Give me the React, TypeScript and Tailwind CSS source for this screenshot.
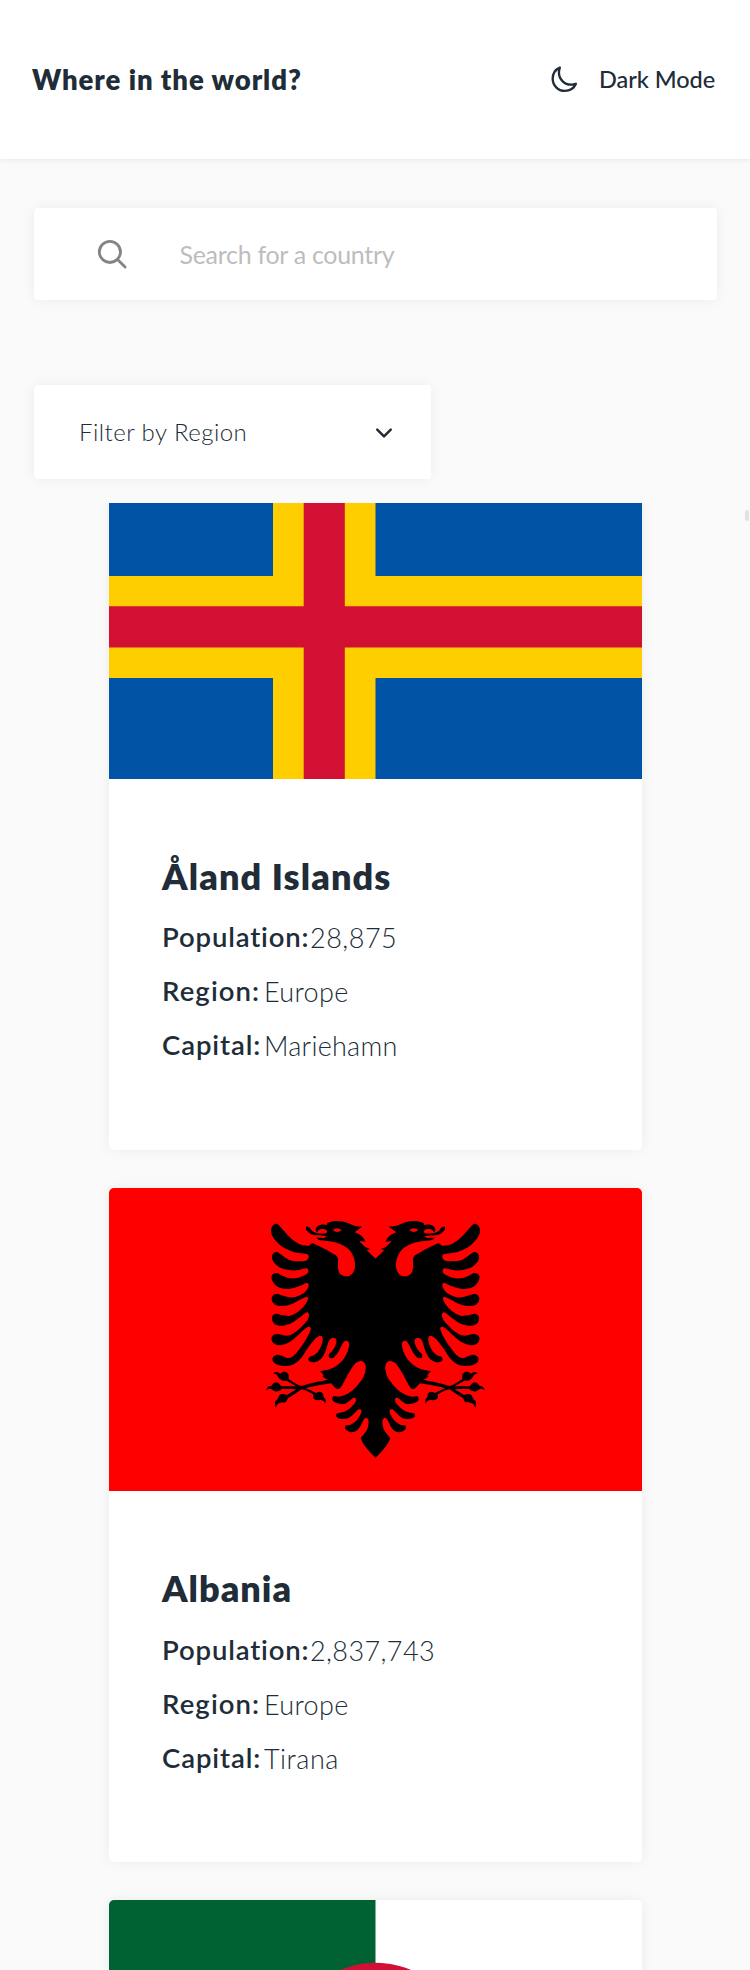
import React from "react";

type Point = [number, number];

/** Joins runs of points: smooth inside a run, a sharp corner between runs. */
function spline(runs: Point[][]): string {
  let d = `M${runs[0][0][0]} ${runs[0][0][1]}`;
  for (const run of runs) {
    for (let i = 0; i < run.length - 1; i++) {
      const p0 = run[Math.max(i - 1, 0)];
      const p1 = run[i];
      const p2 = run[i + 1];
      const p3 = run[Math.min(i + 2, run.length - 1)];
      const c1 = [p1[0] + (p2[0] - p0[0]) / 6, p1[1] + (p2[1] - p0[1]) / 6];
      const c2 = [p2[0] - (p3[0] - p1[0]) / 6, p2[1] - (p3[1] - p1[1]) / 6];
      d += `C${c1[0].toFixed(1)} ${c1[1].toFixed(1)} ${c2[0].toFixed(1)} ${c2[1].toFixed(1)} ${p2[0]} ${p2[1]}`;
    }
  }
  return d + "Z";
}

const EAGLE_HALF = spline([
  [[362, 176], [350, 165], [335, 150]],
  [[335, 150], [347, 147]],
  [[347, 147], [330, 140], [313, 124]],
  [[313, 124], [332, 125]],
  [[332, 125], [320, 108], [299, 97]],
  [[299, 97], [308, 90], [321, 80]],
  [[321, 80], [300, 78], [280, 70], [258, 64], [238, 63], [217, 69]],
  [[217, 69], [216, 75]],
  [[216, 75], [198, 74], [186, 80], [182, 89], [186, 98]],
  [[186, 98], [192, 89], [203, 87], [214, 90], [215, 98], [205, 101]],
  [[205, 101], [185, 99], [172, 93], [165, 84], [154, 79]],
  [[154, 79], [153, 88], [163, 99], [180, 106], [205, 107], [215, 108]],
  [[215, 108], [205, 114], [183, 112]],
  [[183, 112], [192, 120], [210, 122], [235, 126], [262, 135], [285, 152], [297, 175], [300, 200], [292, 221], [275, 229], [256, 222], [249, 205], [249, 177], [243, 166]],
  [[243, 166], [210, 147], [172, 129]],
  [[172, 129], [162, 137]],
  [[162, 137], [138, 134], [110, 117], [88, 94], [70, 74], [60, 72], [51, 80], [48, 94], [54, 111], [75, 135], [105, 152], [130, 159], [156, 162], [161, 171], [153, 182], [130, 184], [105, 181], [84, 168], [66, 156], [54, 161], [51, 175], [60, 191], [80, 205], [108, 211], [135, 209], [154, 205], [160, 212], [154, 223], [130, 233], [105, 235], [82, 227], [65, 219], [52, 224], [50, 237], [60, 254], [80, 265], [105, 266], [132, 259], [154, 249], [161, 254], [156, 269], [140, 283], [118, 292], [95, 290], [65, 282], [52, 289], [51, 302], [62, 315], [84, 318], [108, 313], [135, 299], [154, 291], [159, 298], [148, 317], [128, 336], [106, 347], [84, 346], [64, 341], [52, 348], [52, 362], [62, 374], [84, 377], [110, 369], [136, 351], [155, 337], [162, 344], [157, 361], [136, 384], [112, 402], [94, 407], [66, 402], [52, 408], [50, 420], [60, 433], [80, 435], [104, 426], [130, 405], [150, 386], [162, 380], [167, 388], [155, 415], [133, 448], [115, 468], [98, 474], [80, 467], [64, 465], [53, 474], [56, 487], [72, 496], [95, 498], [118, 492], [138, 475], [158, 445], [180, 417], [196, 407], [203, 414], [201, 430], [192, 451], [178, 465], [163, 471], [161, 481], [172, 487], [188, 484], [203, 470], [213, 449], [222, 422], [234, 413], [244, 419], [242, 434], [233, 451], [222, 463], [223, 473], [235, 473], [248, 459], [261, 434], [270, 423], [280, 425], [282, 437], [275, 461], [260, 484], [240, 500], [218, 509], [195, 513]],
  [[195, 513], [207, 526]],
  [[207, 526], [203, 529], [214, 538], [225, 541]],
  [[225, 541], [233, 555], [247, 567], [258, 561], [268, 544], [279, 523], [293, 500], [306, 487], [319, 483], [330, 491], [332, 508], [325, 532], [309, 554], [290, 573], [268, 586], [250, 590], [235, 588]],
  [[235, 588], [232, 600], [247, 610], [268, 612], [282, 604], [294, 594], [303, 597], [300, 608], [283, 626], [265, 636], [245, 640]],
  [[245, 640], [244, 650], [260, 657], [281, 654], [299, 639], [311, 628], [319, 631], [316, 645], [302, 664], [287, 674], [272, 676]],
  [[272, 676], [271, 686], [285, 696], [302, 694], [315, 681], [325, 661], [332, 653], [340, 659], [340, 675], [334, 693], [317, 714]],
  [[317, 714], [325, 731], [342, 753], [362, 774]],
]);

const TALONS = spline([
  [[230, 538], [205, 542], [175, 548], [138, 558]],
  [[138, 558], [118, 548], [101, 537]],
  [[101, 537], [101, 525], [94, 517], [84, 516], [76, 521]],
  [[76, 521], [65, 516], [54, 520]],
  [[54, 520], [66, 525], [72, 535], [83, 542], [95, 542]],
  [[95, 542], [125, 559]],
  [[125, 559], [100, 559], [79, 559]],
  [[79, 559], [70, 549], [57, 549], [49, 558]],
  [[49, 558], [39, 561], [33, 571]],
  [[33, 571], [43, 566], [50, 568], [60, 574], [72, 573], [80, 567]],
  [[80, 567], [105, 567], [124, 568]],
  [[124, 568], [96, 585]],
  [[96, 585], [84, 582], [74, 585], [68, 597]],
  [[68, 597], [60, 606], [62, 624]],
  [[62, 624], [68, 612], [78, 608], [92, 606], [99, 594]],
  [[99, 594], [120, 581], [140, 568]],
  [[140, 568], [156, 573], [175, 583]],
  [[175, 583], [175, 594], [184, 600], [199, 600]],
  [[199, 600], [207, 604], [210, 611]],
  [[210, 611], [212, 600], [206, 592]],
  [[206, 592], [203, 580], [194, 575], [183, 579]],
  [[183, 579], [165, 570], [150, 564]],
  [[150, 564], [185, 557], [233, 549]],
]);

function AlandFlag() {
  return (
    <svg viewBox="0 22.5 533 303" className="block h-[303px] w-full" preserveAspectRatio="none">
      <rect width="533" height="349" fill="#0053a5" />
      <path d="M164 0h102.5v349H164zM0 122.5h533v102H0z" fill="#ffce00" />
      <path d="M194.7 0h41.1v349h-41.1zM0 152.8h533v41.1H0z" fill="#d21034" />
    </svg>
  );
}

function AlbaniaFlag() {
  return (
    <svg viewBox="0 0 533 303" className="block h-[303px] w-full">
      <rect width="533" height="303" fill="#ff0000" />
      {["translate(146 12) scale(.33333)", "translate(387 12) scale(-.33333 .33333)"].map((transform) => (
        <g key={transform} transform={transform}>
          <path d={EAGLE_HALF} />
          <path d={TALONS} />
          <path d="M233 90q13-11 27 0q-14 12-27 0z" fill="#ff0000" />
        </g>
      ))}
      <path d="M265 71.5h3v196h-3z" />
    </svg>
  );
}

function AlgeriaFlag() {
  return (
    <svg viewBox="0 0 533 303" className="block h-[303px] w-full">
      <rect width="533" height="303" fill="#fff" />
      <rect width="266.5" height="303" fill="#006233" />
      <path
        d="M335.5 95.1a88.8 88.8 0 1 0 0 112.8a71 71 0 1 1 0-112.8z"
        fill="#d21034"
      />
      <path d="M250 151.5l62-20-38 52v-64l38 52z" fill="#d21034" />
    </svg>
  );
}

type Detail = { label: string; labelClass: string; value: string; valueClass: string };
type Country = {
  name: string;
  nameClass: string;
  Flag: () => React.ReactElement;
  details: Detail[];
};

const countries: Country[] = [
  {
    name: "Åland Islands",
    nameClass: "mb-[9px] tracking-[1.1px]",
    Flag: AlandFlag,
    details: [
      { label: "Population:", labelClass: "w-[148px] tracking-[0.85px]", value: "28,875", valueClass: "tracking-[0.5px]" },
      { label: "Region:", labelClass: "w-[102px] tracking-[1.1px]", value: "Europe", valueClass: "tracking-[0.35px]" },
      { label: "Capital:", labelClass: "w-[102px] tracking-[0.9px]", value: "Mariehamn", valueClass: "tracking-[0.25px]" },
    ],
  },
  {
    name: "Albania",
    nameClass: "mb-[10px] tracking-[1px]",
    Flag: AlbaniaFlag,
    details: [
      { label: "Population:", labelClass: "w-[148px] tracking-[0.85px]", value: "2,837,743", valueClass: "tracking-[0.4px]" },
      { label: "Region:", labelClass: "w-[102px] tracking-[1.1px]", value: "Europe", valueClass: "tracking-[0.35px]" },
      { label: "Capital:", labelClass: "w-[102px] tracking-[0.9px]", value: "Tirana", valueClass: "tracking-[0.5px]" },
    ],
  },
  { name: "", nameClass: "", Flag: AlgeriaFlag, details: [] },
];

function CountryCard({ country }: { country: Country }) {
  const { Flag } = country;
  return (
    <article className="h-[674px] w-[533px] shrink-0 overflow-hidden rounded-[5px] bg-white shadow-[0_0_14px_rgba(0,0,0,0.06)]">
      <Flag />
      <div className="px-[53px] pt-[72px]">
        <h2 className={`text-[36px] leading-[50px] font-extrabold whitespace-nowrap ${country.nameClass}`}>
          {country.name}
        </h2>
        {country.details.map((detail) => (
          <div key={detail.label} className="flex h-[54px] leading-[54px] whitespace-nowrap">
            <span className={`text-[27.5px] font-semibold ${detail.labelClass}`}>{detail.label}</span>
            <span className={`pt-px text-[27px] font-light ${detail.valueClass}`}>{detail.value}</span>
          </div>
        ))}
      </div>
    </article>
  );
}

export default function App() {
  return (
    <div className="flex h-[1970px] w-[750px] flex-col overflow-hidden bg-[#fafafa] font-['Lato',sans-serif] text-[#202c37]">
      <header className="z-10 flex h-[159px] shrink-0 items-center justify-between bg-white pr-[35px] pl-[32px] shadow-[0_2px_4px_rgba(0,0,0,0.06)]">
        <h1 className="text-[27.5px] leading-[40px] font-extrabold whitespace-nowrap tracking-[0.95px]">Where in the world?</h1>
        <button className="flex items-center">
          <svg viewBox="0 0 512 512" className="mr-[20px] size-[28.6px]" fill="none" stroke="currentColor" strokeWidth="42" strokeLinejoin="round">
            <path d="M160 136c0-30.62 4.51-61.61 16-88C99.57 81.27 48 159.32 48 248c0 119.29 96.71 216 216 216 88.68 0 166.73-51.57 200-128-26.39 11.49-57.38 16-88 16-119.29 0-216-96.71-216-216z" />
          </svg>
          <span className="w-[116px] pb-[2px] text-left text-[23.5px] leading-[36px] font-medium whitespace-nowrap tracking-[-0.05px]">Dark Mode</span>
        </button>
      </header>

      <div className="mt-[49px] ml-[34px] flex h-[92px] w-[683px] shrink-0 items-center rounded-[4px] bg-white pl-[61px] shadow-[0_0_14px_rgba(0,0,0,0.06)]">
        <svg viewBox="0 0 512 512" className="size-[34.5px] text-[#848484]" fill="none" stroke="currentColor" strokeWidth="42" strokeLinecap="round">
          <circle cx="221" cy="221" r="157" />
          <path d="M338 338L446 446" />
        </svg>
        <span className="pl-[50px] text-[25px] leading-[36px] whitespace-nowrap text-[#bdbdbd] tracking-[-0.3px]">Search for a country</span>
      </div>

      <div className="mt-[85px] ml-[34px] flex h-[94px] w-[397px] shrink-0 items-center justify-between rounded-[4px] bg-white pr-[35px] pl-[45px] shadow-[0_0_14px_rgba(0,0,0,0.06)]">
        <span className="text-[24px] leading-[36px] font-light whitespace-nowrap tracking-[0.47px]">Filter by Region</span>
        <svg viewBox="0 0 512 512" className="mt-px size-[24px]" fill="none" stroke="currentColor" strokeWidth="52" strokeLinecap="round" strokeLinejoin="round">
          <path d="M112 184l144 144 144-144" />
        </svg>
      </div>

      <main className="mt-[24px] flex min-h-0 flex-1 items-start overflow-hidden">
        <div className="-mt-[27px] flex flex-1 flex-col gap-[38px] pl-[109px]">
          {countries.map((country, index) => (
            <CountryCard key={index} country={country} />
          ))}
        </div>
        <div className="mt-[7px] mr-[1px] h-[11px] w-[4px] rounded-[2px] bg-[#e2e2e2]" />
      </main>
    </div>
  );
}
